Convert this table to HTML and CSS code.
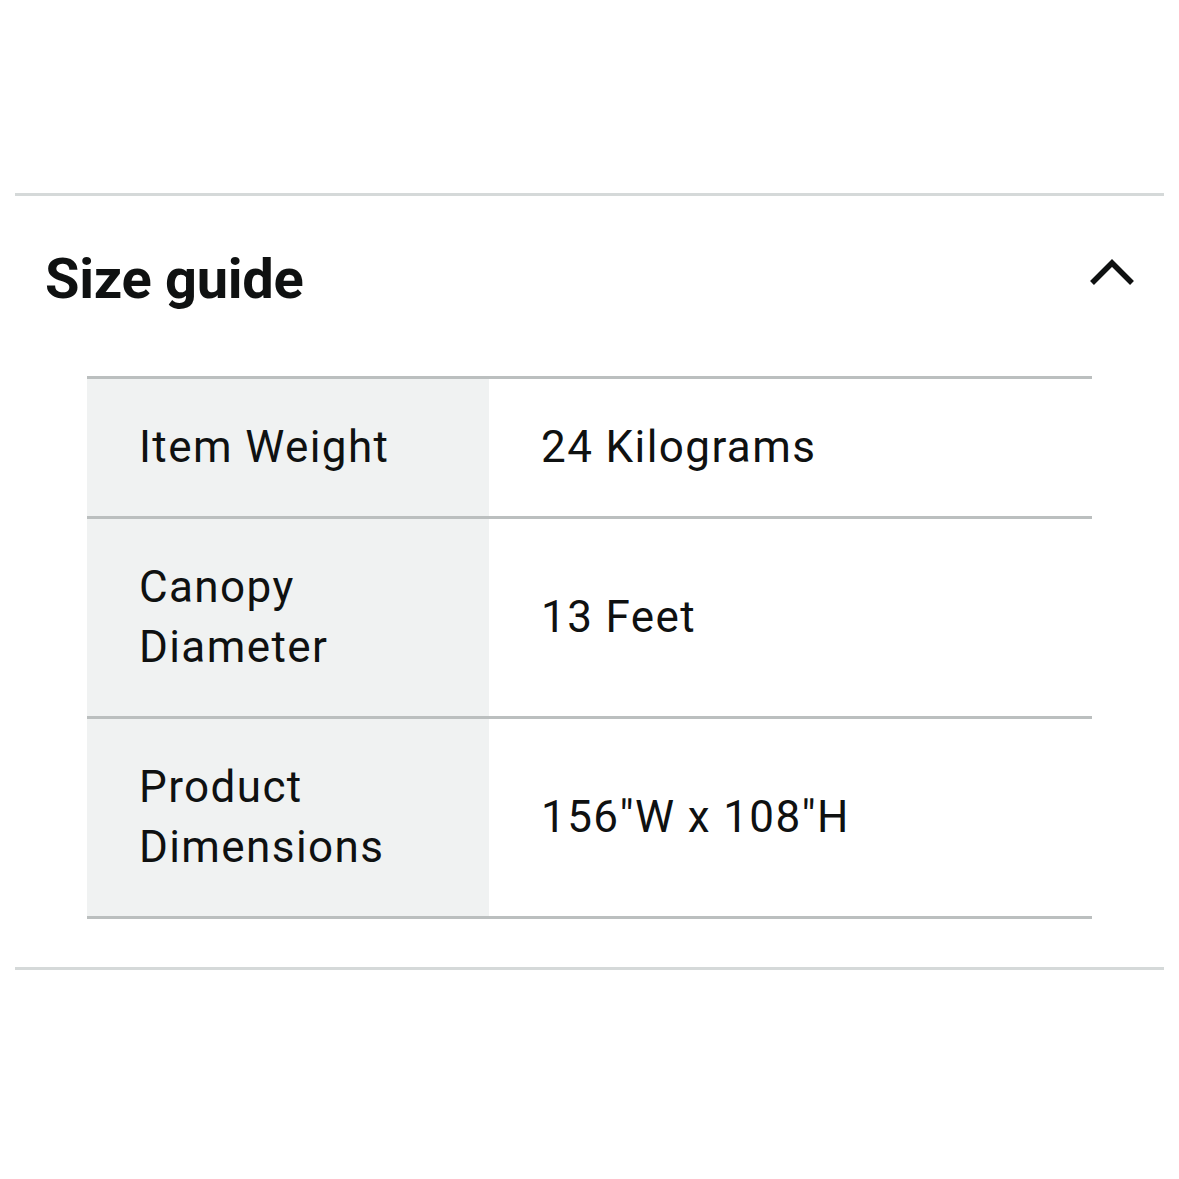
FILE: index.html
```html
<!DOCTYPE html>
<html>
<head>
<meta charset="utf-8">
<link rel="stylesheet" href="styles.css">
</head>
<body>
<section class="accordion">
  <div class="acc-header">
    <h2 class="acc-title">Size guide</h2>
    <svg class="chevron" width="46" height="30" viewBox="0 0 46 30"><polyline points="3,26 23,6 43,26" fill="none" stroke="#0f1111" stroke-width="5.5"/></svg>
  </div>
  <table class="size-table">
    <tr><th>Item Weight</th><td>24 Kilograms</td></tr>
    <tr><th>Canopy<br>Diameter</th><td>13 Feet</td></tr>
    <tr><th>Product<br>Dimensions</th><td>156"W x 108"H</td></tr>
  </table>
</section>
</body>
</html>
```
FILE: styles.css
```css
html, body { margin: 0; padding: 0; background: #fff; }
body { font-family: Roboto, "Liberation Sans", sans-serif; color: #0f1111; }
.accordion {
  margin: 193px 15px 0;
  border-top: 3px solid #d5d9d9;
  border-bottom: 3px solid #d5d9d9;
  padding: 0 72px 48px;
}
.acc-header {
  display: flex;
  align-items: center;
  justify-content: space-between;
  margin: 0 -43px 0 -41px;
  padding-top: 50px;
}
.acc-title {
  margin: 0 0 0 -1px;
  font-size: 56px;
  line-height: 67px;
  font-weight: 700;
  letter-spacing: -0.3px;
}
.chevron { display: block; margin-top: -15px; }
.size-table {
  margin-top: 63px;
  width: 100%;
  border-collapse: collapse;
}
.size-table tr { border-top: 3px solid #bbbfbf; border-bottom: 3px solid #bbbfbf; }
.size-table th, .size-table td {
  font-size: 44px;
  line-height: 60px;
  font-weight: 400;
  letter-spacing: 1.4px;
  text-align: left;
  vertical-align: middle;
  padding: 38px 52px 39px;
}
.size-table th { background: #f0f2f2; width: 298px; }
```
